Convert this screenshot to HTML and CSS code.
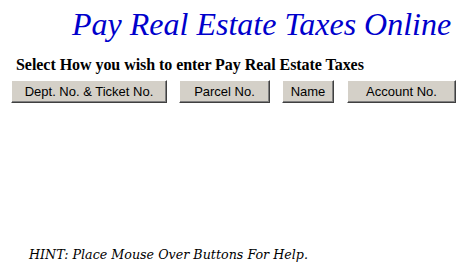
FILE: index.html
```html
<!DOCTYPE html>
<html>
<head>
<meta charset="utf-8">
<link rel="stylesheet" href="styles.css">
</head>
<body>
<div class="page">
  <h1 class="title">Pay Real Estate Taxes Online</h1>
  <h2 class="subtitle">Select How you wish to enter Pay Real Estate Taxes</h2>
  <div class="buttons">
    <button class="btn btn-dept">Dept. No. &amp; Ticket No.</button>
    <button class="btn btn-parcel">Parcel No.</button>
    <button class="btn btn-name">Name</button>
    <button class="btn btn-account">Account No.</button>
  </div>
  <p class="hint">HINT: Place Mouse Over Buttons For Help.</p>
</div>
</body>
</html>
```
FILE: styles.css
```css
html, body {
  margin: 0;
  padding: 0;
  background: #ffffff;
}
.page {
  width: 468px;
  height: 274px;
  display: flex;
  flex-direction: column;
}
.title {
  margin: 6px 0 0 72px;
  font-family: "Liberation Serif", serif;
  font-style: italic;
  font-weight: normal;
  font-size: 32px;
  line-height: 36px;
  color: #0000cc;
  white-space: nowrap;
}
.subtitle {
  margin: 14px 0 0 16px;
  font-family: "Liberation Serif", serif;
  font-weight: bold;
  font-size: 16px;
  line-height: 18px;
  letter-spacing: -0.05px;
  color: #000;
  white-space: nowrap;
}
.buttons {
  display: flex;
  margin: 6px 0 0 11px;
}
.btn {
  box-sizing: border-box;
  height: 23px;
  padding: 0;
  margin: 0;
  font-family: "Liberation Sans", Arial, sans-serif;
  font-size: 13px;
  color: #000;
  background: #d4d0c8;
  border: 1px solid;
  border-color: #ffffff #404040 #404040 #ffffff;
  box-shadow: inset -1px -1px 0 #808080;
  border-radius: 0;
}
.btn-dept { width: 156px; }
.btn-parcel { width: 91px; margin-left: 12px; }
.btn-name { width: 52px; margin-left: 12px; }
.btn-account { width: 109px; margin-left: 13px; }
.hint {
  margin: 144px 0 0 29px;
  font-family: "DejaVu Serif", serif;
  font-style: italic;
  font-size: 12.7px;
  line-height: 15px;
  color: #000;
  white-space: nowrap;
}
```
